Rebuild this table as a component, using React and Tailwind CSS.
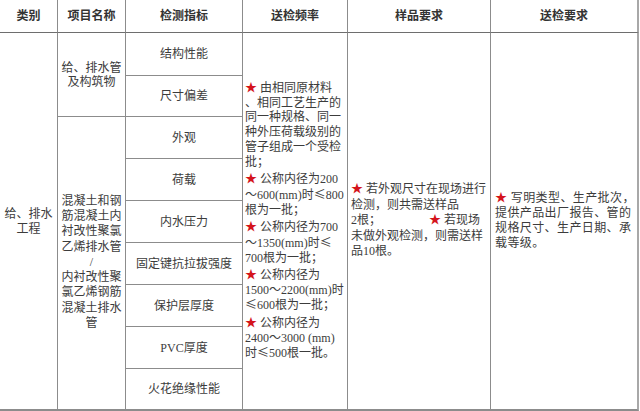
import React from "react";

const Star = () => <span className="text-[#d4141c]">★</span>;
const Le = () => <span style={{ fontFamily: '"Noto Sans CJK SC", sans-serif' }}>≤</span>;

const cell = "border-r border-b border-[#8c8c8c] flex items-center justify-center text-center";

export default function App() {
  const col3 = ["结构性能", "尺寸偏差", "外观", "荷载", "内水压力", "固定键抗拉拔强度", "保护层厚度", "PVC厚度", "火花绝缘性能"];
  const col4 = [
    [<><Star /> 由相同原材料</>, "、相同工艺生产的", "同一种规格、同一", "种外压荷载级别的", "管子组成一个受检", "批；"],
    [<><Star /> 公称内径为200</>, <>～600(mm)时<Le />800</>, "根为一批；"],
    [<><Star /> 公称内径为700</>, <>～1350(mm)时<Le /></>, "700根为一批；"],
    [<><Star /> 公称内径为</>, "1500～2200(mm)时", <><Le />600根为一批；</>],
    [<><Star /> 公称内径为</>, "2400～3000 (mm)", <>时<Le />500根一批。</>],
  ];
  return (
    <div
      className="w-[640px] h-[411px] bg-white text-[12px] text-[#3c3c3c] overflow-hidden"
      style={{ fontFamily: '"Liberation Serif", "Noto Sans CJK SC", serif' }}
    >
      <div className="grid grid-cols-[58px_68px_117px_105px_143px_148px] grid-rows-[33px_43px_41px_42px_42px_42px_42px_42px_42px_42px]">
        {/* header */}
        <div className={`${cell} font-bold text-[#333] border-b-[#6e6e6e]`}>类别</div>
        <div className={`${cell} font-bold text-[#333] border-b-[#6e6e6e]`}>项目名称</div>
        <div className={`${cell} font-bold text-[#333] border-b-[#6e6e6e]`}>检测指标</div>
        <div className={`${cell} font-bold text-[#333] border-b-[#6e6e6e]`}>送检频率</div>
        <div className={`${cell} font-bold text-[#333] border-b-[#6e6e6e]`}>样品要求</div>
        <div className={`${cell} font-bold text-[#333] border-b-[#6e6e6e] border-r-2 border-r-[#a8a8a8]`}>送检要求</div>

        {/* col 1 */}
        <div className={`${cell} col-start-1 row-start-2 row-span-9 border-b-2 leading-[14.5px] pt-px`}>
          <div>
            <div>给、排水</div>
            <div>工程</div>
          </div>
        </div>

        {/* col 2 */}
        <div className={`${cell} col-start-2 row-start-2 row-span-2 leading-[14px]`}>
          <div>
            <div>给、排水管</div>
            <div>及构筑物</div>
          </div>
        </div>
        <div className={`${cell} col-start-2 row-start-4 row-span-7 border-b-2 leading-[15.3px] pb-px`}>
          <div>
            <div>混凝土和钢</div>
            <div>筋混凝土内</div>
            <div>衬改性聚氯</div>
            <div>乙烯排水管</div>
            <div>/</div>
            <div>内衬改性聚</div>
            <div>氯乙烯钢筋</div>
            <div>混凝土排水</div>
            <div>管</div>
          </div>
        </div>

        {/* col 3 */}
        {col3.map((t, i) => (
          <div
            key={t}
            className={`${cell} col-start-3 ${i === col3.length - 1 ? "border-b-2" : ""}`}
            style={{ gridRowStart: i + 2 }}
          >
            {t}
          </div>
        ))}

        {/* col 4 */}
        <div className={`${cell} col-start-4 row-start-2 row-span-9 border-b-2 !justify-start !text-left pl-[2px]`}>
          <div className="leading-[14.8px] whitespace-nowrap">
            {col4.map((p, i) => (
              <div key={i} className={i > 0 ? "mt-[2.5px]" : ""}>
                {p.map((l, j) => (
                  <div key={j}>{l}</div>
                ))}
              </div>
            ))}
          </div>
        </div>

        {/* col 5 */}
        <div className={`${cell} col-start-5 row-start-2 row-span-9 border-b-2 !justify-start !text-left pl-[3px]`}>
          <div className="leading-[15.5px] whitespace-nowrap">
            <div><Star /> 若外观尺寸在现场进行</div>
            <div>检测，则共需送样品</div>
            <div>2根；<span className="ml-[48px]"><Star /> 若现场</span></div>
            <div>未做外观检测，则需送样</div>
            <div>品10根。</div>
          </div>
        </div>

        {/* col 6 */}
        <div className={`${cell} col-start-6 row-start-2 row-span-9 border-b-2 border-r-2 border-r-[#a8a8a8] !justify-start !text-left pl-[4px]`}>
          <div className="leading-[15px] whitespace-nowrap tracking-[0.4px]">
            <div><Star /> 写明类型、生产批次，</div>
            <div>提供产品出厂报告、管的</div>
            <div>规格尺寸、生产日期、承</div>
            <div>载等级。</div>
          </div>
        </div>
      </div>
    </div>
  );
}
